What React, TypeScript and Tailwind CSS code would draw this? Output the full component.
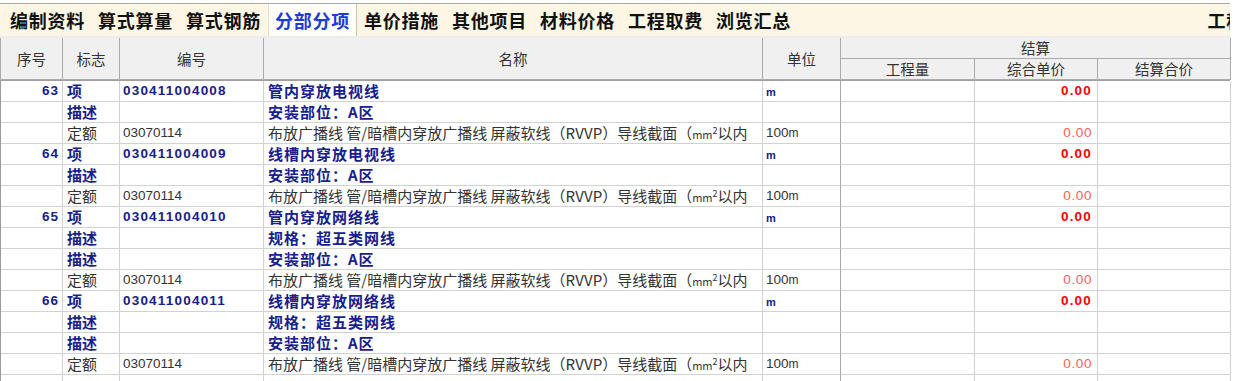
import React from 'react'

const cjk = "font-['Noto_Sans_CJK_SC',sans-serif]"
const num = "font-['Liberation_Sans','Noto_Sans_CJK_SC',sans-serif] tabular-nums"

const tabs = ['编制资料', '算式算量', '算式钢筋', '分部分项', '单价措施', '其他项目', '材料价格', '工程取费', '浏览汇总']

type Row = {
  kind: 'item' | 'desc' | 'quota'
  seq?: number
  code?: string
  name?: string
}

const rows: Row[] = [
  { kind: 'item', seq: 63, code: '030411004008', name: '管内穿放电视线' },
  { kind: 'desc', name: '安装部位：A区' },
  { kind: 'quota', code: '03070114' },
  { kind: 'item', seq: 64, code: '030411004009', name: '线槽内穿放电视线' },
  { kind: 'desc', name: '安装部位：A区' },
  { kind: 'quota', code: '03070114' },
  { kind: 'item', seq: 65, code: '030411004010', name: '管内穿放网络线' },
  { kind: 'desc', name: '规格：超五类网线' },
  { kind: 'desc', name: '安装部位：A区' },
  { kind: 'quota', code: '03070114' },
  { kind: 'item', seq: 66, code: '030411004011', name: '线槽内穿放网络线' },
  { kind: 'desc', name: '规格：超五类网线' },
  { kind: 'desc', name: '安装部位：A区' },
  { kind: 'quota', code: '03070114' },
]

const grid = 'grid grid-cols-[62px_57px_144px_499px_78px_134px_123px_133px]'
const cell = 'h-[21px] border-r border-b border-[#d2d2d2] flex items-center overflow-hidden whitespace-nowrap'
const navy = 'text-[#17208c]'

function BodyRow({ r }: { r: Row }) {
  const bold = r.kind !== 'quota'
  return (
    <div className={grid}>
      <div className={`${cell} justify-end pr-[3px] ${num} text-[13.5px] font-bold tracking-[1px] ${navy}`}>
        {r.seq ?? ''}
      </div>
      <div className={`${cell} pl-[4px] ${cjk} text-[15px] ${bold ? `font-bold ${navy}` : 'text-[#333]'}`}>
        {r.kind === 'item' ? '项' : r.kind === 'desc' ? '描述' : '定额'}
      </div>
      <div
        className={`${cell} pl-[3px] ${num} text-[13.5px] ${
          bold ? `font-bold tracking-[1.2px] ${navy}` : 'text-[#333]'
        }`}
      >
        {r.code ?? ''}
      </div>
      <div className={`${cell} pl-[4px] ${cjk} text-[15px] ${bold ? `font-bold tracking-[1px] ${navy}` : 'text-[#333]'}`}>
        {r.kind === 'quota' ? (
          <span>
            布放广播线 管/暗槽内穿放广播线 屏蔽软线（RVVP）导线截面（<span className="text-[11px]">mm</span>
            <sup className="text-[9px]">2</sup>以内
          </span>
        ) : (
          r.name
        )}
      </div>
      <div className={`${cell} border-r-[#a8a8a8] pl-[3px]`}>
        {r.kind === 'item' && (
          <span className={`font-['Liberation_Sans',sans-serif] text-[11px] leading-none font-bold ${navy} pt-[2px]`}>m</span>
        )}
        {r.kind === 'quota' && (
          <span className={`${num} text-[13.5px] text-[#333]`}>
            100<span className="text-[12px]">m</span>
          </span>
        )}
      </div>
      <div className={cell} />
      <div className={`${cell} justify-end pr-[5px] ${num} text-[13.5px]`}>
        {r.kind === 'item' && <span className="font-bold tracking-[1.2px] text-[#ff0000]">0.00</span>}
        {r.kind === 'quota' && <span className="tracking-[0.6px] text-[#ff5c5c]">0.00</span>}
      </div>
      <div className={cell} />
    </div>
  )
}

export default function App() {
  const head = `bg-[#f0f0f0] border-r border-b border-[#aaaaaa] flex items-center justify-center text-[14.5px] text-[#333] ${cjk}`
  return (
    <div className="w-[1237px] h-[381px] bg-white overflow-hidden">
      <div className="w-[1230px] mt-[3px]">
        {/* tab strip */}
        <div className="h-[35px] border-t border-[#a8a8a8] border-b-2 border-b-[#ececec] bg-[#fcf6e4] flex items-stretch pl-[4px] gap-[1px] overflow-hidden">
          {tabs.map((t) => {
            const active = t === '分部分项'
            return (
              <div
                key={t}
                className={`px-[6px] flex items-center ${cjk} text-[18px] font-bold tracking-[0.75px] ${
                  active ? 'bg-[#fffdf8] text-[#1d3bd8] border-l border-r border-l-[#e6e0cc] border-r-[#c9c3b1]' : 'text-[#111]'
                }`}
              >
                {t}
              </div>
            )
          })}
          <div className={`ml-auto mr-[-15px] flex items-center ${cjk} text-[18px] font-bold tracking-[0.75px] text-[#111] shrink-0`}>
            工程
          </div>
        </div>

        {/* header */}
        <div className={`${grid} grid-rows-[21px_21px] border-l border-[#aaaaaa] border-b border-b-[#a0a0a0]`}>
          <div className={`${head} row-span-2`}>序号</div>
          <div className={`${head} row-span-2`}>标志</div>
          <div className={`${head} row-span-2`}>编号</div>
          <div className={`${head} row-span-2`}>名称</div>
          <div className={`${head} row-span-2`}>单位</div>
          <div className={`${head} col-span-3`}>结算</div>
          <div className={head}>工程量</div>
          <div className={head}>综合单价</div>
          <div className={head}>结算合价</div>
        </div>

        {/* body */}
        <div className="border-l border-[#9a9a9a]">
          {rows.map((r, i) => (
            <BodyRow key={i} r={r} />
          ))}
          <div className={grid}>
            {Array.from({ length: 8 }).map((_, i) => (
              <div key={i} className={`${cell} ${i === 4 ? 'border-r-[#a8a8a8]' : ''}`} />
            ))}
          </div>
        </div>
      </div>
    </div>
  )
}
